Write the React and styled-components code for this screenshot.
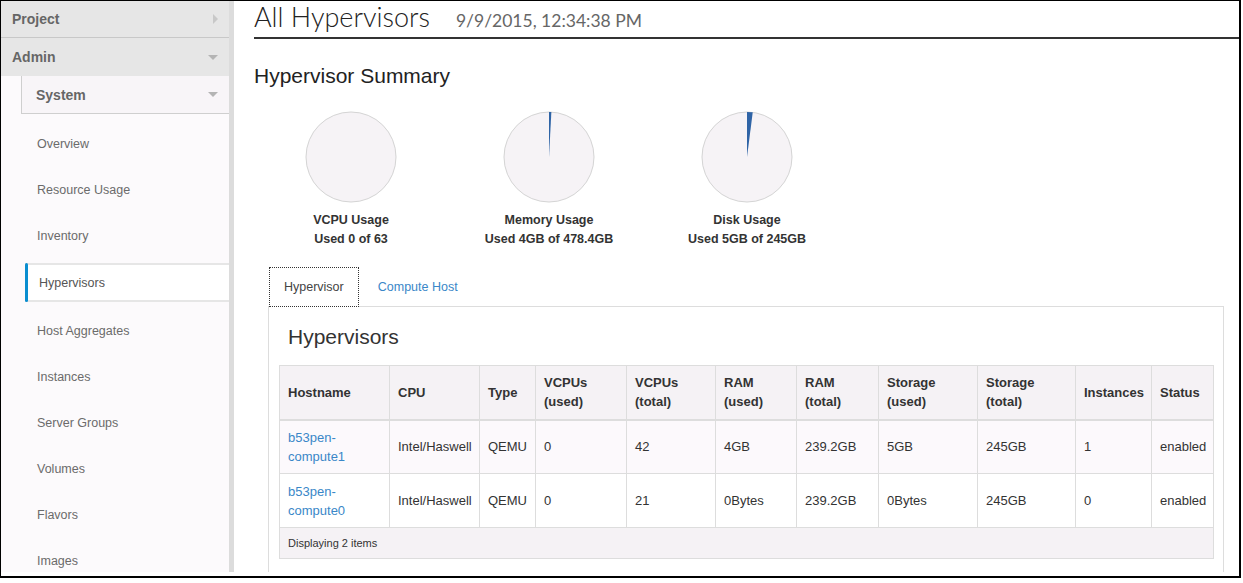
import React from "react";
import styled, { createGlobalStyle, css } from "styled-components";

const Global = createGlobalStyle`
  html, body { margin: 0; padding: 0; background: #fff; }
  body { font-family: "Liberation Sans", Arial, sans-serif; }
  * { box-sizing: border-box; }
`;

const Frame = styled.div`
  width: 1241px;
  height: 578px;
  border-style: solid;
  border-color: #000;
  border-width: 1px 2px 2px 1px;
  background: #fff;
`;

const Viewport = styled.div`
  display: flex;
  height: 571px;
  overflow: hidden;
`;

/* ---------- Sidebar ---------- */
const Sidebar = styled.nav`
  display: flex;
  flex: none;
  height: 100%;
`;

const SideNav = styled.div`
  width: 228px;
  background: #fcfafc;
`;

const ScrollTrack = styled.div`
  width: 5px;
  background: #dcdcdc;
`;

const Section = styled.div`
  display: flex;
  align-items: center;
  justify-content: space-between;
  height: ${(p) => p.$h}px;
  padding: 0 11px 0 ${(p) => p.$pl}px;
  margin-left: ${(p) => p.$ml || 0}px;
  background: ${(p) => p.$bg};
  font-size: 14px;
  font-weight: bold;
  color: #666;
  ${(p) => p.$divider && css`border-bottom: 1px solid #c8c8c8;`}
  ${(p) => p.$boxed && css`
    border-left: 1px solid #cfcfcf;
    border-bottom: 1px solid #cfcfcf;
  `}
`;

const CaretRight = styled.span`
  width: 0;
  height: 0;
  border-top: 5px solid transparent;
  border-bottom: 5px solid transparent;
  border-left: 5px solid #c8c8c8;
`;

const CaretDown = styled.span`
  width: 0;
  height: 0;
  border-left: 5px solid transparent;
  border-right: 5px solid transparent;
  border-top: 5px solid #b4b4b4;
`;

const NavList = styled.ul`
  list-style: none;
  margin: 0 0 0 24px;
  padding: 7px 0 0;
`;

const NavItem = styled.li`
  position: relative;
  display: flex;
  align-items: center;
  height: 46px;
  padding-left: 12px;
  font-size: 12.5px;
  color: #6b6b6b;
  ${(p) => p.$active && css`
    height: 39px;
    margin: 4px 0 6px;
    padding-left: 14px;
    background: #fff;
    border-top: 2px solid #e6e6e6;
    border-bottom: 2px solid #e6e6e6;
    color: #555;
    &::before {
      content: "";
      position: absolute;
      left: 0;
      top: -2px;
      bottom: -2px;
      width: 3px;
      border-radius: 2px;
      background: #0a8ed0;
    }
  `}
`;

/* ---------- Main ---------- */
const Main = styled.main`
  flex: 1;
  min-width: 0;
`;

const PageHeader = styled.header`
  display: flex;
  align-items: baseline;
  height: 38px;
  margin-left: 20px;
  padding-top: 2px;
  border-bottom: 2px solid #333;
`;

const PageTitle = styled.h1`
  margin: 0;
  font-family: Lato, "Liberation Sans", sans-serif;
  font-weight: 300;
  font-size: 27px;
  line-height: 28px;
  color: #222;
`;

const Stamp = styled.span`
  margin-left: 26px;
  font-family: Lato, "Liberation Sans", sans-serif;
  font-size: 17.5px;
  line-height: 28px;
  color: #666;
`;

const SummaryTitle = styled.h2`
  margin: 25px 0 0 20px;
  font-size: 21px;
  font-weight: normal;
  line-height: 24px;
  color: #222;
`;

const PieRow = styled.div`
  display: flex;
  margin: 23px 0 0 18px;
`;

const PieCard = styled.div`
  width: 198px;
  display: flex;
  flex-direction: column;
  align-items: center;
`;

const PieLabel = styled.div`
  margin-top: 8px;
  font-size: 12.5px;
  font-weight: bold;
  line-height: 19px;
  color: #333;
  text-align: center;
`;

const TabBar = styled.div`
  display: flex;
  margin: 18px 15px 0 34px;
  border-bottom: 1px solid #ddd;
  height: 40px;
`;

const Tab = styled.div`
  display: flex;
  align-items: center;
  height: ${(p) => (p.$active ? 40 : 39)}px;
  padding: 0 14px;
  font-size: 12.5px;
  ${(p) =>
    p.$active
      ? css`
          margin-left: 1px;
          border: 1px dotted #333;
          background: #fff;
          color: #444;
        `
      : css`
          margin-left: 5px;
          color: #3a87c8;
        `}
`;

const Panel = styled.section`
  display: flow-root;
  margin: 0 15px 0 34px;
  padding: 0 10px 14px;
  border: 1px solid #ddd;
  border-top: none;
`;

const PanelTitle = styled.h3`
  margin: 18px 0 16px 9px;
  font-size: 21px;
  font-weight: normal;
  line-height: 24px;
  color: #333;
`;

const Table = styled.table`
  width: 100%;
  table-layout: fixed;
  border-collapse: collapse;
`;

const HeadRow = styled.tr`
  height: 54px;
`;

const Th = styled.th`
  padding: 0 8px;
  text-align: left;
  vertical-align: middle;
  font-size: 13px;
  font-weight: bold;
  line-height: 19px;
  color: #333;
  white-space: nowrap;
  background: #f5f2f5;
  border: 1px solid #ddd;
  border-bottom: 2px solid #ddd;
`;

const BodyRow = styled.tr`
  height: 54px;
  background: ${(p) => (p.$odd ? "#fcf9fc" : "#fff")};
`;

const Td = styled.td`
  padding: 0 8px;
  vertical-align: middle;
  font-size: 13px;
  line-height: 19px;
  color: #333;
  border: 1px solid #ddd;
`;

const HostLink = styled.a`
  color: #3a87c8;
  text-decoration: none;
`;

const FootRow = styled.tr`
  height: 31px;
`;

const FootCell = styled.td`
  padding: 0 8px;
  font-size: 11px;
  color: #333;
  background: #f5f2f5;
  border: 1px solid #ddd;
`;

/* ---------- Pie ---------- */
function Pie({ fraction }) {
  const r = 45;
  const cx = 46;
  const cy = 46;
  let slice = null;
  if (fraction > 0) {
    const a = fraction * 2 * Math.PI;
    const x = cx + r * Math.sin(a);
    const y = cy - r * Math.cos(a);
    slice = (
      <path
        d={`M${cx} ${cy} L${cx} ${cy - r} A${r} ${r} 0 0 1 ${x.toFixed(2)} ${y.toFixed(2)} Z`}
        fill="#2f64a6"
      />
    );
  }
  return (
    <svg width="92" height="92" viewBox="0 0 92 92">
      <circle cx={cx} cy={cy} r={r} fill="#f6f3f6" stroke="#d4d4d4" strokeWidth="1" />
      {slice}
    </svg>
  );
}

const navItems = [
  "Overview",
  "Resource Usage",
  "Inventory",
  "Hypervisors",
  "Host Aggregates",
  "Instances",
  "Server Groups",
  "Volumes",
  "Flavors",
  "Images",
];

const pies = [
  { title: "VCPU Usage", sub: "Used 0 of 63", f: 0 },
  { title: "Memory Usage", sub: "Used 4GB of 478.4GB", f: 4 / 478.4 },
  { title: "Disk Usage", sub: "Used 5GB of 245GB", f: 5 / 245 },
];

const colWidths = [110, 90, 56, 91, 89, 81, 82, 99, 98, 76, 62];

const headers = [
  ["Hostname"],
  ["CPU"],
  ["Type"],
  ["VCPUs", "(used)"],
  ["VCPUs", "(total)"],
  ["RAM", "(used)"],
  ["RAM", "(total)"],
  ["Storage", "(used)"],
  ["Storage", "(total)"],
  ["Instances"],
  ["Status"],
];

const rows = [
  ["compute1", "Intel/Haswell", "QEMU", "0", "42", "4GB", "239.2GB", "5GB", "245GB", "1", "enabled"],
  ["compute0", "Intel/Haswell", "QEMU", "0", "21", "0Bytes", "239.2GB", "0Bytes", "245GB", "0", "enabled"],
];

export default function App() {
  return (
    <>
      <Global />
      <Frame>
        <Viewport>
          <Sidebar>
            <SideNav>
              <Section $h={37} $pl={11} $bg="#e6e6e6" $divider>
                <span>Project</span>
                <CaretRight />
              </Section>
              <Section $h={38} $pl={11} $bg="#e6e6e6">
                <span>Admin</span>
                <CaretDown />
              </Section>
              <Section $h={38} $pl={14} $ml={20} $bg="#f8f5f8" $boxed>
                <span>System</span>
                <CaretDown />
              </Section>
              <NavList>
                {navItems.map((n) => (
                  <NavItem key={n} $active={n === "Hypervisors"}>
                    {n}
                  </NavItem>
                ))}
              </NavList>
            </SideNav>
            <ScrollTrack />
          </Sidebar>

          <Main>
            <PageHeader>
              <PageTitle>All Hypervisors</PageTitle>
              <Stamp>9/9/2015, 12:34:38 PM</Stamp>
            </PageHeader>

            <SummaryTitle>Hypervisor Summary</SummaryTitle>
            <PieRow>
              {pies.map((p) => (
                <PieCard key={p.title}>
                  <Pie fraction={p.f} />
                  <PieLabel>
                    {p.title}
                    <br />
                    {p.sub}
                  </PieLabel>
                </PieCard>
              ))}
            </PieRow>

            <TabBar>
              <Tab $active>Hypervisor</Tab>
              <Tab>Compute Host</Tab>
            </TabBar>
            <Panel>
              <PanelTitle>Hypervisors</PanelTitle>
              <Table>
                <colgroup>
                  {colWidths.map((w, i) => (
                    <col key={i} style={{ width: w }} />
                  ))}
                </colgroup>
                <thead>
                  <HeadRow>
                    {headers.map((h, i) => (
                      <Th key={i}>
                        {h[0]}
                        {h[1] && (
                          <>
                            <br />
                            {h[1]}
                          </>
                        )}
                      </Th>
                    ))}
                  </HeadRow>
                </thead>
                <tbody>
                  {rows.map((r, ri) => (
                    <BodyRow key={ri} $odd={ri === 0}>
                      <Td>
                        <HostLink href="#">
                          b53pen-
                          <br />
                          {r[0]}
                        </HostLink>
                      </Td>
                      {r.slice(1).map((c, ci) => (
                        <Td key={ci}>{c}</Td>
                      ))}
                    </BodyRow>
                  ))}
                </tbody>
                <tfoot>
                  <FootRow>
                    <FootCell colSpan={11}>Displaying 2 items</FootCell>
                  </FootRow>
                </tfoot>
              </Table>
            </Panel>
          </Main>
        </Viewport>
      </Frame>
    </>
  );
}
